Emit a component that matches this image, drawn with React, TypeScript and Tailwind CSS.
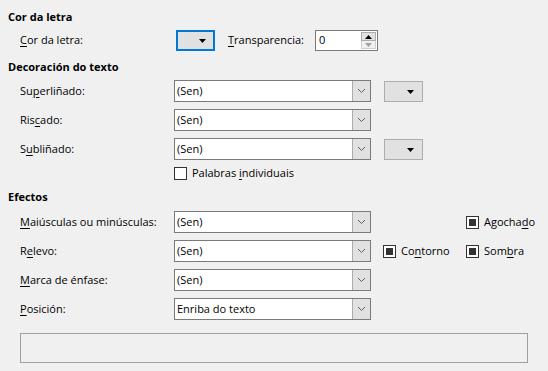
const font = { fontFamily: '"Open Sans", "Noto Sans", sans-serif' };

function U({ children }: { children: string }) {
  return <span className="underline underline-offset-2">{children}</span>;
}

function Combo({ value }: { value: string }) {
  return (
    <div className="flex h-[22px] w-[197px] border border-[#7a7a7a] bg-white">
      <div className="flex flex-1 items-center pl-[2px]">{value}</div>
      <div className="flex w-[18px] items-center justify-center border-l border-[#adadad] bg-[#e1e1e1]">
        <svg width="9" height="6" viewBox="0 0 9 6">
          <path d="M1 1 L4.5 4.5 L8 1" fill="none" stroke="#606060" strokeWidth="1" />
        </svg>
      </div>
    </div>
  );
}

function ColorButton({ focused }: { focused?: boolean }) {
  return (
    <div
      className={
        focused
          ? "flex h-[21px] w-[39px] items-center justify-end border-2 border-[#0078d7] bg-[#e1e1e1] pr-[7px]"
          : "flex h-[21px] w-[39px] items-center justify-end border border-[#adadad] bg-[#e1e1e1] pr-[8px]"
      }
    >
      <svg width="7" height="4" viewBox="0 0 7 4">
        <path d="M0 0 H7 L3.5 4 Z" fill="#000" />
      </svg>
    </div>
  );
}

function Check({ checked, children }: { checked?: boolean; children: React.ReactNode }) {
  return (
    <div className="flex items-center gap-[5px]">
      <div className="flex h-[13px] w-[13px] items-center justify-center border border-[#333] bg-white">
        {checked && <div className="h-[7px] w-[7px] bg-[#333]" />}
      </div>
      <span>{children}</span>
    </div>
  );
}

function Row({ label, children }: { label: React.ReactNode; children: React.ReactNode }) {
  return (
    <div className="flex h-[22px] items-center pl-3">
      <div className="w-[154px]">{label}</div>
      {children}
    </div>
  );
}

export default function App() {
  return (
    <div
      className="flex h-[371px] w-[548px] flex-col bg-[#f0f0f0] px-2 pt-2 text-[11px] text-black"
      style={font}
    >
      <div className="h-[18px] font-bold leading-[18px]">Cor da letra</div>
      <div className="mt-[4px] flex h-[21px] items-center pl-3">
        <div className="w-[156px]">
          <U>C</U>or da letra:
        </div>
        <ColorButton focused />
        <div className="ml-[13px] w-[87px]">
          <U>T</U>ransparencia:
        </div>
        <div className="flex h-[21px] w-[63px] items-center border border-[#7a7a7a] bg-white pl-[3px]">
          <span className="flex-1">0</span>
          <div className="mr-[1px] flex h-[17px] w-[15px] flex-col">
            <div className="flex flex-1 items-center justify-center border border-[#adadad] bg-[#e1e1e1]">
              <svg width="7" height="4" viewBox="0 0 7 4">
                <path d="M0 4 H7 L3.5 0 Z" fill="#000" />
              </svg>
            </div>
            <div className="flex flex-1 items-center justify-center border border-t-0 border-[#d0d0d0] bg-[#f0f0f0]">
              <svg width="7" height="4" viewBox="0 0 7 4">
                <path d="M0 0 H7 L3.5 4 Z" fill="#a0a0a0" />
              </svg>
            </div>
          </div>
        </div>
      </div>

      <div className="mt-[7px] h-[18px] font-bold leading-[18px]">Decoración do texto</div>
      <div className="mt-[4px] flex flex-col gap-[7px]">
        <Row label={<>Su<U>p</U>erliñado:</>}>
          <Combo value="(Sen)" />
          <div className="ml-[13px] mt-[1px]">
            <ColorButton />
          </div>
        </Row>
        <Row label={<>Ris<U>c</U>ado:</>}>
          <Combo value="(Sen)" />
        </Row>
        <Row label={<>S<U>u</U>bliñado:</>}>
          <Combo value="(Sen)" />
          <div className="ml-[13px] mt-[1px]">
            <ColorButton />
          </div>
        </Row>
      </div>
      <div className="mt-[7px] flex h-[13px] items-center pl-[166px]">
        <Check>
          Palabras <U>i</U>ndividuais
        </Check>
      </div>

      <div className="mt-[8px] h-[18px] font-bold leading-[18px]">Efectos</div>
      <div className="mt-[5px] flex flex-col gap-[7px]">
        <Row label={<><U>M</U>aiúsculas ou minúsculas:</>}>
          <Combo value="(Sen)" />
          <div className="ml-[95px]">
            <Check checked>
              Agocha<U>d</U>o
            </Check>
          </div>
        </Row>
        <Row label={<>R<U>e</U>levo:</>}>
          <Combo value="(Sen)" />
          <div className="ml-[12px] w-[83px]">
            <Check checked>
              Co<U>n</U>torno
            </Check>
          </div>
          <Check checked>
            Som<U>b</U>ra
          </Check>
        </Row>
        <Row label={<><U>M</U>arca de énfase:</>}>
          <Combo value="(Sen)" />
        </Row>
        <Row label={<><U>P</U>osición:</>}>
          <Combo value="Enriba do texto" />
        </Row>
      </div>

      <div className="mx-3 mt-[13px] h-[30px] border border-[#a0a0a0] bg-[#f0f0f0]" />
    </div>
  );
}
